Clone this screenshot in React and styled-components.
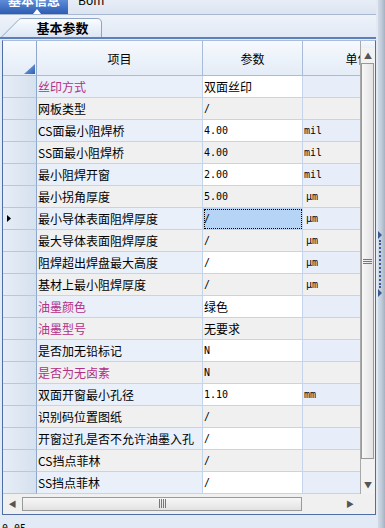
import React from 'react';
import styled, { createGlobalStyle } from 'styled-components';

const GlobalStyle = createGlobalStyle`
  html, body {
    margin: 0;
    padding: 0;
    background: #e2eaf5;
  }
  body {
    font-family: "Noto Sans CJK SC", "Liberation Sans", sans-serif;
    font-size: 12px;
    color: #000;
  }
`;

const rows = [
  { name: '丝印方式', pink: true, val: '双面丝印', unit: '' },
  { name: '网板类型', val: '/', unit: '' },
  { name: 'CS面最小阻焊桥', val: '4.00', unit: 'mil' },
  { name: 'SS面最小阻焊桥', val: '4.00', unit: 'mil' },
  { name: '最小阻焊开窗', val: '2.00', unit: 'mil' },
  { name: '最小拐角厚度', val: '5.00', unit: 'μm' },
  { name: '最小导体表面阻焊厚度', val: '/', unit: 'μm', selected: true },
  { name: '最大导体表面阻焊厚度', val: '/', unit: 'μm' },
  { name: '阻焊超出焊盘最大高度', val: '/', unit: 'μm' },
  { name: '基材上最小阻焊厚度', val: '/', unit: 'μm' },
  { name: '油墨颜色', pink: true, val: '绿色', unit: '' },
  { name: '油墨型号', pink: true, val: '无要求', unit: '' },
  { name: '是否加无铅标记', val: 'N', unit: '' },
  { name: '是否为无卤素', pink: true, val: 'N', unit: '' },
  { name: '双面开窗最小孔径', val: '1.10', unit: 'mm' },
  { name: '识别码位置图纸', val: '/', unit: '' },
  { name: '开窗过孔是否不允许油墨入孔', val: '/', unit: '' },
  { name: 'CS挡点菲林', val: '/', unit: '' },
  { name: 'SS挡点菲林', val: '/', unit: '' },
];

const Page = styled.div`
  width: 385px;
  height: 528px;
  display: flex;
  overflow: hidden;
`;

const Main = styled.div`
  width: 376px;
  display: flex;
  flex-direction: column;
`;

const TopStrip = styled.div`
  height: 14px;
  display: flex;
  align-items: flex-start;
  background: linear-gradient(#e8eef7, #dbe4f1);
  border-bottom: 1px solid #a7b8d0;
  overflow: hidden;
`;

const TopTab = styled.div`
  position: relative;
  width: 68px;
  height: 14px;
  display: flex;
  justify-content: center;
  background: linear-gradient(#5f8cd8, #2d5db2);
  color: #fff;
  font-weight: bold;
  font-size: 13px;
  line-height: 14px;

  &::after {
    content: '';
    position: absolute;
    left: 33px;
    bottom: 0;
    border-left: 4px solid transparent;
    border-right: 4px solid transparent;
    border-bottom: 5px solid #fff;
  }
`;

const TopLabel = styled.span`
  margin-top: -7px;
`;

const PlainTab = styled.span`
  margin-left: 10px;
  margin-top: -7px;
  line-height: 14px;
  font-size: 12px;
`;

const TabBar = styled.div`
  height: 22px;
  display: flex;
  align-items: flex-end;
  background: linear-gradient(#eef3fa, #e1e9f5);
  border-bottom: 2px solid #5d80ba;
`;

const Tab = styled.div`
  position: relative;
  width: 101px;
  height: 19px;
  margin-left: 1px;
  display: flex;
  align-items: center;
  justify-content: center;
  padding-left: 22px;
  box-sizing: border-box;
  font-weight: bold;
  font-size: 13px;

  svg {
    position: absolute;
    inset: 0;
  }
  span {
    position: relative;
  }
`;

const GridFrame = styled.div`
  margin: 1px 0 0 2px;
  height: 475px;
  box-sizing: border-box;
  border: 1px solid #4f6ea3;
  border-top-color: #a9bcd8;
  display: grid;
  grid-template-columns: 357px 15px;
  grid-template-rows: 453px 19px;
  background: #f0f0f0;
`;

const Viewport = styled.div`
  overflow: hidden;
`;

const Table = styled.div`
  display: grid;
  grid-template-columns: 34px 166px 100px 110px;
  grid-template-rows: 35px;
  grid-auto-rows: 22px;
`;

const HeadCell = styled.div`
  display: flex;
  align-items: center;
  justify-content: center;
  box-sizing: border-box;
  background: linear-gradient(#f6f9fd, #e4ecf7);
  border-right: 1px solid #a8bcd9;
  border-bottom: 1px solid #a8bcd9;
  white-space: nowrap;
  overflow: hidden;
`;

const HeadCorner = styled(HeadCell)`
  align-items: flex-end;
  justify-content: flex-end;
  padding: 0 1px 1px 0;
  border-right-color: #8ea7cb;
`;

const RowHead = styled.div`
  display: flex;
  align-items: center;
  padding-left: 4px;
  box-sizing: border-box;
  background: linear-gradient(to right, #e6edf6, #d6e1ef);
  border-right: 1px solid #8ea7cb;
  border-bottom: 1px solid #b6c7df;
`;

const Cell = styled.div`
  display: flex;
  align-items: center;
  padding-left: ${p => (p.$indent ? 3 : 1)}px;
  box-sizing: border-box;
  background: ${p => p.$bg};
  border-right: 1px solid #c4d4ea;
  border-bottom: 1px solid #c4d4ea;
  white-space: nowrap;
  overflow: hidden;
  color: ${p => (p.$pink ? '#b22f86' : '#000')};
  font-family: ${p =>
    p.$mono
      ? '"DejaVu Sans Mono", "Liberation Mono", monospace'
      : '"Noto Sans CJK SC", "Liberation Sans", sans-serif'};
  font-size: ${p => (p.$mono ? 10 : 12)}px;
  ${p =>
    p.$selected &&
    `
    outline: 1px dotted #000;
    outline-offset: -2px;
  `}
`;

const VScroll = styled.div`
  grid-row: 1;
  grid-column: 2;
  display: flex;
  flex-direction: column;
  background: #f2f2f2;
  border-left: 1px solid #a9a9a9;
`;

const ScrollCap = styled.div`
  height: 7px;
  background: linear-gradient(#f6f9fd, #e9eff8);
`;

const ArrowBtn = styled.div`
  height: ${p => p.$h}px;
  display: flex;
  align-items: center;
  justify-content: center;
  color: #555;
  font-size: 8px;
  line-height: 1;
`;

const VThumb = styled.div`
  height: 396px;
  margin: 0 1px 0 0;
  box-sizing: border-box;
  border: 1px solid #999;
  background: linear-gradient(to right, #f7f7f7, #e3e3e3);
  display: flex;
  align-items: center;
  justify-content: center;
`;

const Spacer = styled.div`
  flex: 1;
`;

const HScroll = styled.div`
  display: flex;
  align-items: center;
  background: #f0f0f0;
`;

const HThumb = styled.div`
  width: 280px;
  height: 14px;
  box-sizing: border-box;
  border: 1px solid #999;
  background: linear-gradient(#f7f7f7, #e2e2e2);
  display: flex;
  align-items: center;
  justify-content: center;
`;

const SideBtn = styled.div`
  width: ${p => p.$w}px;
  display: flex;
  justify-content: center;
  color: #555;
  font-size: 8px;
`;

const Corner = styled.div`
  background: #f0f0f0;
`;

const Status = styled.div`
  flex: 1;
  padding: 8px 0 0 2px;
  font-family: "DejaVu Sans Mono", "Liberation Mono", monospace;
  font-size: 10px;
  line-height: 12px;
  overflow: hidden;
`;

const Splitter = styled.div`
  width: 9px;
  display: flex;
  flex-direction: column;
  justify-content: center;
  padding-left: 2px;
  box-sizing: border-box;
  background: linear-gradient(to right, #e3e9f2 0, #e3e9f2 2px, #cfd9e7 2px, #c4cedb 5px, #a5b1c1 100%);
`;

const SplitArrow = styled.div`
  width: 0;
  height: 0;
  border-top: 4px solid transparent;
  border-bottom: 4px solid transparent;
  border-left: 4px solid #3b5b92;
`;

const SplitDots = styled.div`
  height: 48px;
  margin: 1px 0 1px 1px;
  border-left: 2px dotted #3b5b92;
`;

const Grip = ({ vertical }) =>
  vertical ? (
    <svg width="9" height="5">
      <path d="M0 0.5H9M0 2.5H9M0 4.5H9" stroke="#777" />
    </svg>
  ) : (
    <svg width="7" height="9">
      <path d="M0.5 0V9M2.5 0V9M4.5 0V9M6.5 0V9" stroke="#777" />
    </svg>
  );

const rowColors = (i) =>
  i % 2 === 1
    ? { name: '#f0f0f0', val: '#f0f0f0', unit: '#f0f0f0' }
    : { name: '#eaf0f9', val: '#ffffff', unit: '#e7eef9' };

const isMono = (s) => /^[0-9./N]+$/.test(s);

export default function App() {
  return (
    <>
      <GlobalStyle />
      <Page>
        <Main>
          <TopStrip>
            <TopTab>
              <TopLabel>基本信息</TopLabel>
            </TopTab>
            <PlainTab>Bom</PlainTab>
          </TopStrip>
          <TabBar>
            <Tab>
              <svg width="101" height="19" viewBox="0 0 101 19">
                <defs>
                  <linearGradient id="tabg" x1="0" y1="0" x2="0" y2="1">
                    <stop offset="0" stopColor="#fbfdff" />
                    <stop offset="1" stopColor="#dbe6f5" />
                  </linearGradient>
                </defs>
                <path
                  d="M0.5 19 L18 1.5 Q19 0.5 21 0.5 L96 0.5 Q100.5 0.5 100.5 5 L100.5 19"
                  fill="url(#tabg)"
                  stroke="#8ea5c6"
                />
              </svg>
              <span>基本参数</span>
            </Tab>
          </TabBar>
          <GridFrame>
            <Viewport>
              <Table>
                <HeadCorner>
                  <svg width="11" height="10">
                    <defs>
                      <linearGradient id="tri" x1="0" y1="0" x2="1" y2="1">
                        <stop offset="0" stopColor="#8fb0e3" />
                        <stop offset="1" stopColor="#2c5fb4" />
                      </linearGradient>
                    </defs>
                    <path d="M11 0 L11 10 L0 10 Z" fill="url(#tri)" />
                  </svg>
                </HeadCorner>
                <HeadCell>项目</HeadCell>
                <HeadCell>参数</HeadCell>
                <HeadCell>单位</HeadCell>
                {rows.map((r, i) => {
                  const c = rowColors(i);
                  return (
                    <React.Fragment key={i}>
                      <RowHead>
                        {r.selected && (
                          <svg width="4" height="7">
                            <path d="M0 0 L4 3.5 L0 7 Z" fill="#000" />
                          </svg>
                        )}
                      </RowHead>
                      <Cell $bg={c.name} $pink={r.pink}>{r.name}</Cell>
                      <Cell
                        $bg={r.selected ? '#b6d4f6' : c.val}
                        $mono={isMono(r.val)}
                        $selected={r.selected}
                      >
                        {r.val}
                      </Cell>
                      <Cell $bg={c.unit} $mono $indent={r.unit === 'μm'}>
                        {r.unit}
                      </Cell>
                    </React.Fragment>
                  );
                })}
              </Table>
            </Viewport>
            <VScroll>
              <ScrollCap />
              <ArrowBtn $h={15}>▲</ArrowBtn>
              <VThumb>
                <Grip vertical />
              </VThumb>
              <Spacer />
              <ArrowBtn $h={18}>▼</ArrowBtn>
            </VScroll>
            <HScroll>
              <SideBtn $w={19}>◀</SideBtn>
              <HThumb>
                <Grip />
              </HThumb>
              <Spacer />
              <SideBtn $w={20}>▶</SideBtn>
            </HScroll>
            <Corner />
          </GridFrame>
          <Status>0.05</Status>
        </Main>
        <Splitter>
          <SplitArrow />
          <SplitDots />
          <SplitArrow />
        </Splitter>
      </Page>
    </>
  );
}
